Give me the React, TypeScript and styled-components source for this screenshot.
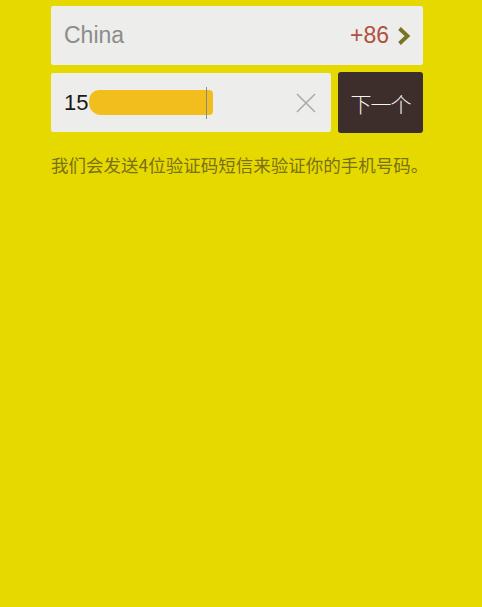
import React from 'react';
import styled, { createGlobalStyle } from 'styled-components';

const GlobalStyle = createGlobalStyle`
  html, body {
    margin: 0;
    padding: 0;
    background-color: #e6d900;
  }
  body {
    font-family: 'Liberation Sans', 'Noto Sans CJK SC', sans-serif;
  }
`;

const Page = styled.div`
  width: 482px;
  min-height: 607px;
  box-sizing: border-box;
  padding: 6px 59px 0 51px;
  background-color: #e6d900;
  display: flex;
  flex-direction: column;
`;

const Field = styled.div<{ $grow?: boolean }>`
  display: flex;
  align-items: center;
  height: 59px;
  box-sizing: border-box;
  padding: 0 12px 0 13px;
  background-color: #ededeb;
  border-radius: 2px;
  flex: ${(p) => (p.$grow ? '1' : 'none')};
`;

const CountryName = styled.span`
  flex: 1;
  font-size: 23px;
  color: #8c8c8c;
`;

const Code = styled.span`
  font-size: 23px;
  color: #b0513f;
  margin-right: 8px;
`;

const Row = styled.div`
  display: flex;
  gap: 7px;
  margin-top: 8px;
`;

const PhoneValue = styled.div`
  flex: 1;
  display: flex;
  align-items: center;
  font-size: 22px;
  color: #1a1a1a;
`;

const Redaction = styled.span`
  display: inline-block;
  width: 124px;
  height: 25px;
  margin-left: 1px;
  border-radius: 10px 4px 4px 12px;
  background-color: #f2be1e;
`;

const Caret = styled.span`
  display: inline-block;
  width: 1px;
  height: 32px;
  margin-left: -7px;
  background-color: #8a8a80;
`;

const ClearButton = styled.span`
  display: flex;
  margin-right: 3px;
`;

const NextButton = styled.button`
  width: 85px;
  height: 61px;
  margin-top: -1px;
  border: none;
  border-radius: 3px;
  background-color: #3d2e2b;
  color: #f4f4f0;
  font-family: 'Noto Sans CJK SC', sans-serif;
  font-size: 21px;
  font-weight: 300;
  letter-spacing: -1px;
  padding: 0;
`;

const Hint = styled.p`
  margin: 19px 0 0;
  font-family: 'Noto Sans CJK SC', sans-serif;
  font-size: 17.5px;
  color: #7a7018;
  white-space: nowrap;
`;

function App() {
  return (
    <>
      <GlobalStyle />
      <Page>
        <Field>
          <CountryName>China</CountryName>
          <Code>+86</Code>
          <svg width="14" height="20" viewBox="0 0 14 20">
            <path d="M2.5 2.5 L10.5 10 L2.5 17.5" fill="none" stroke="#7a7424" strokeWidth="3.8" strokeLinejoin="miter" />
          </svg>
        </Field>
        <Row>
          <Field $grow>
            <PhoneValue>
              15
              <Redaction />
              <Caret />
            </PhoneValue>
            <ClearButton>
              <svg width="20" height="20" viewBox="0 0 20 20">
                <path d="M1 1 L19 19 M19 1 L1 19" stroke="#ababab" strokeWidth="1.6" />
              </svg>
            </ClearButton>
          </Field>
          <NextButton>下一个</NextButton>
        </Row>
        <Hint>我们会发送4位验证码短信来验证你的手机号码。</Hint>
      </Page>
    </>
  );
}

export default App;
